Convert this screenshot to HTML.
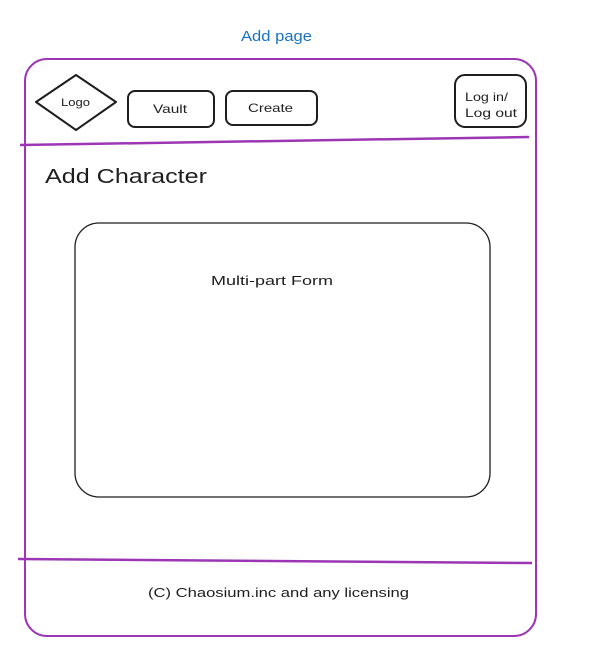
<!DOCTYPE html>
<html><head><meta charset="utf-8"><style>
html,body{margin:0;padding:0;background:#fff;width:590px;height:672px;overflow:hidden}
svg{display:block}
text{font-family:"Comic Sans MS","Liberation Sans",sans-serif}
</style></head><body>
<svg width="590" height="672" viewBox="0 0 590 672">
<text x="241" y="41" font-size="15" fill="#1971c2" textLength="71" lengthAdjust="spacingAndGlyphs">Add page</text>
<rect x="25" y="59" width="511" height="577" rx="22" fill="none" stroke="#9c36b5" stroke-width="2"/>
<path d="M20 145 L529 137" stroke="#9c36b5" stroke-width="2.5" fill="none"/>
<path d="M18 559 L532 563" stroke="#9c36b5" stroke-width="2.5" fill="none"/>
<path d="M76 75 L116 102 L76 130 L36 102 Z" fill="none" stroke="#1e1e1e" stroke-width="2" stroke-linejoin="round"/>
<text x="61" y="106" font-size="11" fill="#1e1e1e" textLength="29" lengthAdjust="spacingAndGlyphs">Logo</text>
<rect x="128" y="91" width="86" height="36" rx="7" fill="none" stroke="#1e1e1e" stroke-width="2"/>
<text x="153" y="113" font-size="12" fill="#1e1e1e" textLength="34" lengthAdjust="spacingAndGlyphs">Vault</text>
<rect x="226" y="91" width="91" height="34" rx="7" fill="none" stroke="#1e1e1e" stroke-width="2"/>
<text x="248" y="112" font-size="12" fill="#1e1e1e" textLength="45" lengthAdjust="spacingAndGlyphs">Create</text>
<rect x="455" y="75" width="71" height="52" rx="10" fill="none" stroke="#1e1e1e" stroke-width="2"/>
<text x="465" y="101" font-size="12" fill="#1e1e1e" textLength="43" lengthAdjust="spacingAndGlyphs">Log in/</text>
<text x="465" y="117" font-size="12" fill="#1e1e1e" textLength="52" lengthAdjust="spacingAndGlyphs">Log out</text>
<text x="45" y="183" font-size="20" fill="#1e1e1e" textLength="162" lengthAdjust="spacingAndGlyphs">Add Character</text>
<rect x="75" y="223" width="415" height="274" rx="24" fill="none" stroke="#1e1e1e" stroke-width="1.3"/>
<text x="211" y="285" font-size="13" fill="#1e1e1e" textLength="122" lengthAdjust="spacingAndGlyphs">Multi-part Form</text>
<text x="148" y="597" font-size="13" fill="#1e1e1e" textLength="261" lengthAdjust="spacingAndGlyphs">(C) Chaosium.inc and any licensing</text>
</svg>
</body></html>
